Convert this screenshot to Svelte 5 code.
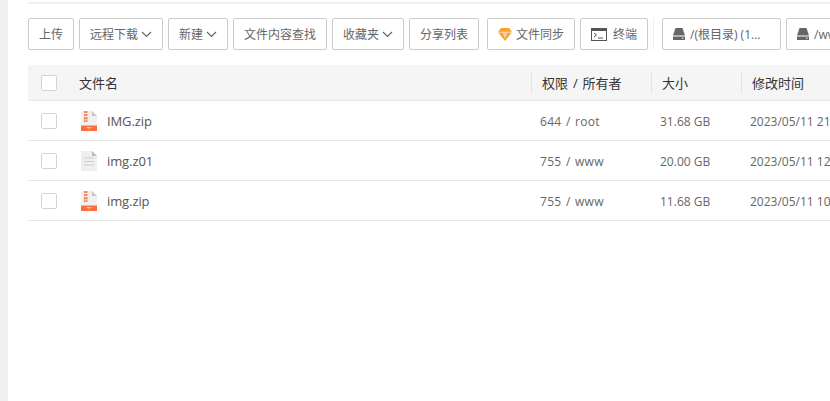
<script>
  const files = [
    { name: "IMG.zip", type: "zip", perm: "644 / root", size: "31.68 GB", time: "2023/05/11 21:04:36" },
    { name: "img.z01", type: "doc", perm: "755 / www", size: "20.00 GB", time: "2023/05/11 12:10:22" },
    { name: "img.zip", type: "zip", perm: "755 / www", size: "11.68 GB", time: "2023/05/11 10:32:18" }
  ];
</script>

{#snippet chevron()}
  <svg class="chev" width="11" height="7" viewBox="0 0 11 7"><path d="M1 1l4.5 4.5L10 1" fill="none" stroke="#666" stroke-width="1.2" /></svg>
{/snippet}

{#snippet disk()}
  <svg class="disk" width="12" height="12" viewBox="0 0 12 12">
    <path d="M2.5 0h7L12 7.5H0z" fill="#666" />
    <path d="M0 8.5h12V12H0z" fill="#666" />
    <path d="M9 9.8h1.5v1H9z" fill="#fff" />
  </svg>
{/snippet}

<div class="page">
  <div class="side"></div>
  <main>
    <div class="topline"></div>
    <div class="toolbar">
      <button class="w46">上传</button>
      <button class="w84">远程下载{@render chevron()}</button>
      <button class="w60">新建{@render chevron()}</button>
      <button class="w94">文件内容查找</button>
      <button class="w72">收藏夹{@render chevron()}</button>
      <button class="w70">分享列表</button>
      <button class="sync">
        <svg width="14" height="13" viewBox="0 0 14 13">
          <path d="M3 0h8l3 4-7 9-7-9z" fill="#fa9f2c" />
          <path d="M4.5 4.6L7 11l2.5-6.4z" fill="#fdd3a0" />
          <path d="M0.5 4.2h13" stroke="#fff" stroke-width="0.7" />
        </svg>
        文件同步
      </button>
      <button class="term">
        <svg width="16" height="13" viewBox="0 0 16 13">
          <rect x="0.5" y="0.5" width="15" height="12" fill="#fff" stroke="#555" />
          <rect x="0" y="0" width="16" height="3" fill="#555" />
          <path d="M3 5l2.5 2L3 9M7 10h5" fill="none" stroke="#555" />
        </svg>
        终端
      </button>
      <span class="sep"></span>
      <button class="drive">{@render disk()}/(根目录) (1...</button>
      <button class="drive">{@render disk()}/www (1...</button>
    </div>

    <div class="head">
      <div class="c-check"><span class="box"></span></div>
      <div class="c-name">文件名</div>
      <div class="c-perm bar">权限 / 所有者</div>
      <div class="c-size bar">大小</div>
      <div class="c-time bar">修改时间</div>
    </div>
    {#each files as f}
      <div class="row">
        <div class="c-check"><span class="box"></span></div>
        <div class="c-name">
          {#if f.type === "zip"}
            <svg class="ficon" width="16" height="20" viewBox="0 0 16 20">
              <path d="M0 0h11l5 5v15H0z" fill="#f2efec" />
              <path d="M11 0l5 5h-5z" fill="#c9c6c3" />
              <path d="M0 14.5h16V20H0z" fill="#f9703e" />
              <path d="M3 0h3.5v2H3zM3 3h3.5v2H3zM3 6h3.5v5H3z" fill="#f9895f" />
              <path d="M4 8h1.5v1.5H4z" fill="#f2efec" />
              <path d="M5.5 16h5v.8H8.5v1.8h-1v-1.8h-2z" fill="#fbc3ac" />
            </svg>
          {:else}
            <svg class="ficon" width="16" height="20" viewBox="0 0 16 20">
              <path d="M0 0h11l5 5v15H0z" fill="#efefef" />
              <path d="M11 0l5 5h-5z" fill="#bcbcbc" />
              <path d="M3 7h10M3 10.5h10M3 14h10" stroke="#cfcfcf" stroke-width="1" />
            </svg>
          {/if}
          <span class="fname">{f.name}</span>
        </div>
        <div class="c-perm perm">{f.perm}</div>
        <div class="c-size">{f.size}</div>
        <div class="c-time">{f.time}</div>
      </div>
    {/each}
  </main>
</div>

<style>
  :global(body) {
    margin: 0;
    overflow: hidden;
  }
  .page {
    display: flex;
    width: 830px;
    height: 401px;
    background: #fff;
    overflow: hidden;
    font-family: "Open Sans", "Noto Sans CJK SC", sans-serif;
    font-size: 12px;
    color: #666;
  }
  .side {
    flex: 0 0 8px;
    background: #f0f0f0;
  }
  main {
    flex: 1;
    min-width: 0;
    padding-left: 20px;
  }
  .topline {
    height: 2px;
    margin-top: 2px;
    background: #f0f0f0;
  }
  .toolbar {
    display: flex;
    align-items: center;
    gap: 5px;
    margin-top: 14px;
    height: 32px;
  }
  button {
    flex: none;
    box-sizing: border-box;
    height: 32px;
    padding: 0;
    display: flex;
    align-items: center;
    justify-content: center;
    gap: 3px;
    background: #fff;
    border: 1px solid #ccc;
    border-radius: 2px;
    font: inherit;
    color: #666;
    white-space: nowrap;
  }
  .w46 { width: 46px; }
  .w60 { width: 60px; }
  .w70 { width: 70px; }
  .w72 { width: 72px; }
  .w84 { width: 84px; }
  .w94 { width: 94px; }
  .sync {
    width: 88px;
    margin-left: 3px;
    gap: 4px;
  }
  .term {
    width: 68px;
    gap: 6px;
  }
  .drive {
    width: 119px;
    gap: 5px;
    justify-content: flex-start;
    padding-left: 10px;
  }
  .sep {
    flex: none;
    width: 1px;
    height: 32px;
    margin-right: 3px;
    background: #eee;
  }
  .head,
  .row {
    display: flex;
    align-items: center;
    width: 900px;
    box-sizing: border-box;
  }
  .head {
    height: 36px;
    margin-top: 15px;
    background: #f5f5f5;
    border-bottom: 1px solid #e8e8e8;
    color: #333;
    font-size: 13px;
  }
  .row {
    height: 40px;
    padding-top: 1px;
    border-bottom: 1px solid #e8e8e8;
  }
  .c-check {
    flex: 0 0 51px;
    box-sizing: border-box;
    padding-left: 13px;
    display: flex;
  }
  .box {
    box-sizing: border-box;
    width: 16px;
    height: 16px;
    background: #fff;
    border: 1px solid #d4d4d4;
    border-radius: 2px;
  }
  .c-name {
    flex: 0 0 452px;
    display: flex;
    align-items: center;
  }
  .ficon {
    margin: 0 10px 0 2px;
  }
  .fname {
    color: #555;
    font-size: 13px;
    letter-spacing: -0.1px;
  }
  .c-perm {
    flex: 0 0 120px;
    box-sizing: border-box;
    padding-left: 9px;
  }
  .perm {
    letter-spacing: 0.3px;
    word-spacing: 1px;
  }
  .c-size {
    flex: 0 0 90px;
    box-sizing: border-box;
    padding-left: 9px;
  }
  .c-time {
    flex: 1;
    box-sizing: border-box;
    padding-left: 9px;
  }
  .bar {
    height: 22px;
    line-height: 22px;
    padding-left: 10px;
    border-left: 1px solid #e3e3e3;
    word-spacing: 1.5px;
  }
</style>
